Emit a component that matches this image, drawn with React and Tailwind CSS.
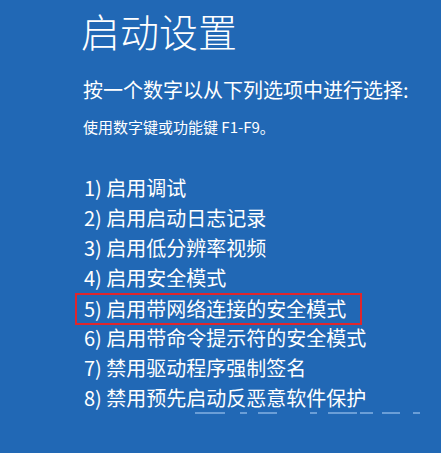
const options = [
  "1) 启用调试",
  "2) 启用启动日志记录",
  "3) 启用低分辨率视频",
  "4) 启用安全模式",
  "5) 启用带网络连接的安全模式",
  "6) 启用带命令提示符的安全模式",
  "7) 禁用驱动程序强制签名",
  "8) 禁用预先启动反恶意软件保护",
];

const App = () => {
  return (
    <div
      className="w-[441px] h-[453px] overflow-hidden bg-[#2168b5] text-white pl-[81px]"
      style={{ fontFamily: '"Noto Sans CJK SC", "Noto Sans", sans-serif' }}
    >
      <h1 className="pt-[10px] text-[39px] leading-[40px] font-light">启动设置</h1>

      <p className="mt-[26px] ml-[2px] text-[20px] leading-[28px]">按一个数字以从下列选项中进行选择:</p>

      <p className="mt-[13px] ml-[2px] text-[15px] leading-[20px]">使用数字键或功能键 F1-F9。</p>

      <ul className="mt-[36px] ml-[3px]">
        {options.map((opt, i) =>
          i === 4 ? (
            <li
              key={opt}
              className="w-fit -ml-[9px] pl-[7px] pr-[14px] h-[32px] leading-[28px] border-2 border-[#e0262c] text-[20px] -mb-[2px]"
            >
              {opt}
            </li>
          ) : (
            <li key={opt} className="h-[30px] leading-[30px] text-[20px]">
              {opt}
            </li>
          )
        )}
      </ul>

      {/* faint remnants under the list */}
      <div className="-mt-[1px] ml-[114px] flex items-center h-[2px] opacity-60">
        <div className="w-[30px] h-[2px] bg-[#9cc3ee]" />
        <div className="ml-[15px] w-[7px] h-[2px] bg-[#9cc3ee]" />
        <div className="ml-[11px] w-[19px] h-[2px] bg-[#9cc3ee]" />
        <div className="ml-[33px] w-[7px] h-[2px] bg-[#9cc3ee]" />
        <div className="ml-[11px] w-[29px] h-[2px] bg-[#9cc3ee]" />
        <div className="ml-[3px] w-[13px] h-[2px] bg-[#9cc3ee]" />
        <div className="ml-[9px] w-[18px] h-[2px] bg-[#9cc3ee]" />
        <div className="ml-[13px] w-[7px] h-[2px] bg-[#9cc3ee]" />
      </div>
    </div>
  );
};

export default App;
